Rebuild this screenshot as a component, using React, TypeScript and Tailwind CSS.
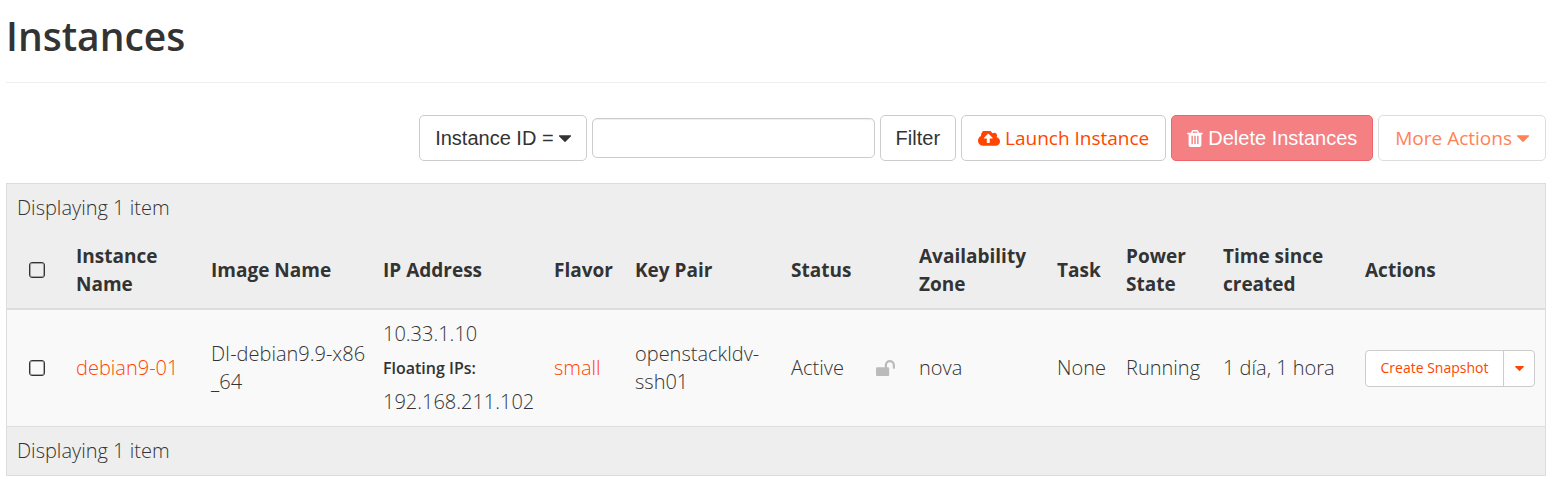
import React from "react";

type IconProps = { className?: string };

const CaretDown = ({ className }: IconProps) => (
  <svg viewBox="384 640 1024 576" fill="currentColor" aria-hidden="true" className={className}>
    <path d="M1408 704q0 26-19 45l-448 448q-19 19-45 19t-45-19l-448-448q-19-19-19-45t19-45 45-19h896q26 0 45 19t19 45z" />
  </svg>
);

const CloudUpload = ({ className }: IconProps) => (
  <svg viewBox="0 256 1920 1280" fill="currentColor" aria-hidden="true" className={className}>
    <path d="M1280 864q0-14-9-23l-352-352q-9-9-23-9t-23 9l-351 351q-10 12-10 24 0 14 9 23t23 9h224v352q0 13 9.5 22.5t22.5 9.5h192q13 0 22.5-9.5t9.5-22.5v-352h224q13 0 22.5-9.5t9.5-22.5zm640 288q0 159-112.5 271.5t-271.5 112.5h-1088q-185 0-316.5-131.5t-131.5-316.5q0-130 70-240t188-165q-2-30-2-43 0-212 150-362t362-150q156 0 285.5 87t188.5 231q71-62 166-62 106 0 181 75t75 181q0 76-41 138 130 31 213.5 135.5t83.5 238.5z" />
  </svg>
);

const Trash = ({ className }: IconProps) => (
  <svg viewBox="192 128 1408 1536" fill="currentColor" aria-hidden="true" className={className}>
    <path d="M704 1376v-704q0-14-9-23t-23-9h-64q-14 0-23 9t-9 23v704q0 14 9 23t23 9h64q14 0 23-9t9-23zm256 0v-704q0-14-9-23t-23-9h-64q-14 0-23 9t-9 23v704q0 14 9 23t23 9h64q14 0 23-9t9-23zm256 0v-704q0-14-9-23t-23-9h-64q-14 0-23 9t-9 23v704q0 14 9 23t23 9h64q14 0 23-9t9-23zm-544-992h448l-48-117q-7-9-17-11h-317q-10 2-17 11zm928 32v64q0 14-9 23t-23 9h-96v948q0 83-47 143.5t-113 60.5h-832q-66 0-113-58.5t-47-141.5v-952h-96q-14 0-23-9t-9-23v-64q0-14 9-23t23-9h309l70-167q15-37 54-63t79-26h320q40 0 79 26t54 63l70 167h309q14 0 23 9t9 23z" />
  </svg>
);

const Unlocked = ({ className }: IconProps) => (
  <svg viewBox="64 128 1664 1408" fill="currentColor" role="img" aria-label="Unlocked" className={className}>
    <path d="M1728 576v256q0 26-19 45t-45 19h-64q-26 0-45-19t-19-45v-256q0-106-75-181t-181-75-181 75-75 181v192h96q40 0 68 28t28 68v576q0 40-28 68t-68 28h-960q-40 0-68-28t-28-68v-576q0-40 28-68t68-28h672v-192q0-185 131.5-316.5t316.5-131.5 316.5 131.5 131.5 316.5z" />
  </svg>
);

const Checkbox = ({ label }: { label: string }) => (
  <input
    type="checkbox"
    aria-label={label}
    className="mx-auto block size-4 appearance-none rounded-[3px] border border-[#333] shadow-[inset_0_0_0_1px_rgba(51,51,51,0.4)] checked:bg-[#333]"
  />
);

const button = "flex h-[46px] shrink-0 items-center gap-[5px] rounded-[5px] border whitespace-nowrap";
const plain = "px-[15px] text-xl font-['Liberation_Sans',Arial,sans-serif]";
const link = "px-4 text-[19px]";

const columns = [
  { title: "Instance Name", width: "w-[135px]" },
  { title: "Image Name", width: "w-[172px]" },
  { title: "IP Address", width: "w-[171px]" },
  { title: "Flavor", width: "w-[81px]" },
  { title: "Key Pair", width: "w-[156px]" },
  { title: "Status", width: "w-[86px]" },
  { title: "", width: "w-[42px]" },
  { title: "Availability Zone", width: "w-[138px]" },
  { title: "Task", width: "w-[69px]" },
  { title: "Power State", width: "w-[97px]" },
  { title: "Time since created", width: "w-[142px]" },
  { title: "Actions", width: "w-[190px]" },
];

function Toolbar() {
  return (
    <form className="mt-8 flex items-center justify-end gap-[5px]" onSubmit={(e) => e.preventDefault()}>
      <button type="button" className={`${button} ${plain} border-[#ccc] bg-white text-[#333]`}>
        Instance ID = <CaretDown className="h-[7px] w-3" />
      </button>
      <input
        type="text"
        aria-label="Instance ID"
        className="h-10 w-[283px] min-w-0 rounded-[5px] border border-[#ccc] px-3 text-lg text-[#333] shadow-[inset_0_1px_1px_rgba(0,0,0,0.075)]"
      />
      <button type="submit" className={`${button} ${plain} border-[#ccc] bg-white text-[#333]`}>
        Filter
      </button>
      <a href="#launch" className={`${button} ${link} border-[#ccc] bg-white text-[#ff4500]`}>
        <CloudUpload className="h-[15px] w-[22px]" /> Launch Instance
      </a>
      <button type="button" className={`${button} ${plain} border-[#f0636a] bg-[#f48084] text-white`}>
        <Trash className="h-[17px] w-4" /> Delete Instances
      </button>
      <a href="#more" className={`${button} ${link} border-[#ddd] bg-white text-[#ff8257]`}>
        More Actions <CaretDown className="h-[7px] w-3" />
      </a>
    </form>
  );
}

export default function App() {
  return (
    <main className="pt-2 pr-[13px] pb-4 pl-[6px] font-['Open_Sans','Noto_Sans',sans-serif] text-[#333]">
      <h1 className="border-b border-[#eee] pb-[18px] text-[39px] leading-14 font-semibold">Instances</h1>
      <Toolbar />
      <div className="mt-[22px] border border-[#ddd]">
        <table className="w-full table-fixed border-collapse text-left text-[20px] leading-7 font-light">
          <colgroup>
            <col className="w-[59px]" />
            {columns.map((c, i) => (
              <col key={i} className={c.width} />
            ))}
          </colgroup>
          <thead className="bg-[#eee]">
            <tr>
              <td colSpan={13} className="p-[10px]">Displaying 1 item</td>
            </tr>
            <tr className="border-b-2 border-[#ddd]">
              <th className="p-[10px]"><Checkbox label="Select all instances" /></th>
              {columns.map((c, i) => (
                <th key={i} scope="col" className="p-[10px] text-[19px] leading-7 font-bold">{c.title}</th>
              ))}
            </tr>
          </thead>
          <tbody className="bg-[#f9f9f9]">
            <tr>
              <td className="p-[10px]"><Checkbox label="Select debian9-01" /></td>
              <td className="p-[10px]"><a href="#instance" className="text-[#ff4500]">debian9-01</a></td>
              <td className="py-[10px] pr-1 pl-[10px] break-all">DI-debian9.9-x86<wbr />_64</td>
              <td className="p-[10px]">
                <ul className="flex flex-col gap-[6px]">
                  <li>10.33.1.10</li>
                  <li className="text-[16px] leading-7 font-semibold">Floating IPs:</li>
                  <li>192.168.211.102</li>
                </ul>
              </td>
              <td className="p-[10px]"><a href="#flavor" className="text-[#ff4500]">small</a></td>
              <td className="p-[10px]">openstackldv-ssh01</td>
              <td className="p-[10px]">Active</td>
              <td className="px-[9px] py-[10px]"><Unlocked className="h-4 w-[19px] text-[#bbb]" /></td>
              <td className="p-[10px]">nova</td>
              <td className="p-[10px]">None</td>
              <td className="p-[10px]">Running</td>
              <td className="p-[10px] whitespace-nowrap">1 día, 1 hora</td>
              <td className="p-[10px]">
                <div className="flex h-[37px] w-[170px] rounded-[4px] border border-[#ccc] bg-white text-sm font-normal text-[#ff4500]">
                  <button type="button" className="flex-1 whitespace-nowrap">Create Snapshot</button>
                  <button type="button" aria-label="More actions" className="flex w-[31px] items-center justify-center border-l border-[#ccc]">
                    <CaretDown className="h-[5px] w-[9px]" />
                  </button>
                </div>
              </td>
            </tr>
          </tbody>
          <tfoot className="border-t border-[#ddd] bg-[#eee]">
            <tr>
              <td colSpan={13} className="p-[10px]">Displaying 1 item</td>
            </tr>
          </tfoot>
        </table>
      </div>
    </main>
  );
}
